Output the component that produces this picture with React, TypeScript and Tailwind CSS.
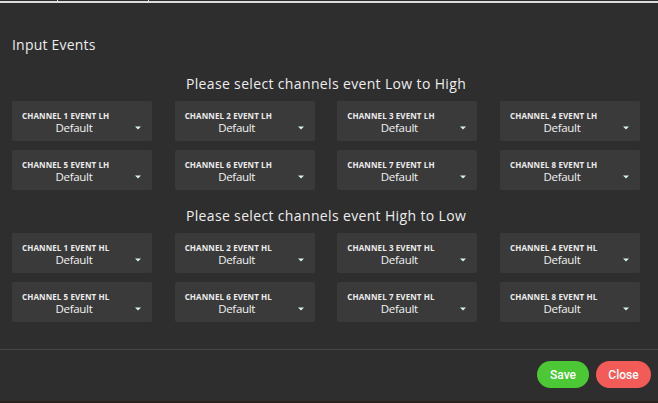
const channels = [1, 2, 3, 4, 5, 6, 7, 8];

function Caret() {
  return (
    <svg width="6" height="4" viewBox="0 0 6 4" className="shrink-0">
      <path d="M0 0.5h6L3 3.5z" fill="#d8f5e6" />
    </svg>
  );
}

function SelectCard({ label }: { label: string }) {
  return (
    <div className="w-[140px] h-10 bg-[#3a3a3a] rounded-[2px] pl-[10px] pr-[11px] pt-[10px] flex flex-col">
      <div className="text-[8px] font-bold text-[#ececec] leading-[10px] whitespace-nowrap tracking-[0.1px]">{label}</div>
      <div className="flex items-center">
        <span className="flex-1 text-center text-[11.5px] leading-[14px] text-[#f2f2f2] tracking-[-0.3px] pr-[9px]">Default</span>
        <Caret />
      </div>
    </div>
  );
}

function Section({ title, suffix }: { title: string; suffix: string }) {
  return (
    <div>
      <h3 className="text-center text-[14px] leading-[20px] font-medium text-[#ededed] tracking-[0.35px] pr-[6px]">{title}</h3>
      <div className="mt-[7px] pl-3 pr-[18px] grid grid-cols-[repeat(4,140px)] justify-between gap-y-[9px]">
        {channels.map((n) => (
          <SelectCard key={n} label={`CHANNEL ${n} EVENT ${suffix}`} />
        ))}
      </div>
    </div>
  );
}

export default function App() {
  return (
    <div className="w-[658px] h-[403px] bg-[#2e2e2e] overflow-hidden flex flex-col" style={{ fontFamily: '"Open Sans", "Liberation Sans", sans-serif' }}>
      <div className="h-[3px] flex border-b-2 border-[#dcdcdc]">
        <div className="w-[58px] border-r border-[#dcdcdc]" />
        <div className="w-[91px] border-r border-[#dcdcdc]" />
      </div>
      <div className="pt-[32px] pl-3 text-[14px] leading-[20px] font-medium text-[#ececec] tracking-[0.2px]">Input Events</div>
      <div className="mt-[19px]">
        <Section title="Please select channels event Low to High" suffix="LH" />
      </div>
      <div className="mt-[16px]">
        <Section title="Please select channels event High to Low" suffix="HL" />
      </div>
      <div className="mt-[27px] border-t border-[#474747]" />
      <div className="flex justify-end gap-[7px] pr-[7px] pt-[11px]" style={{ fontFamily: '"Roboto", "Liberation Sans", sans-serif' }}>
        <button className="w-[52px] h-[27px] rounded-full bg-[#4cc736] text-white text-[12px] font-medium">Save</button>
        <button className="w-[55px] h-[27px] rounded-full bg-[#f35b58] text-white text-[12px] font-medium">Close</button>
      </div>
      <div className="flex-1" />
      <div className="h-[2px] bg-[#2b231f]" />
    </div>
  );
}
